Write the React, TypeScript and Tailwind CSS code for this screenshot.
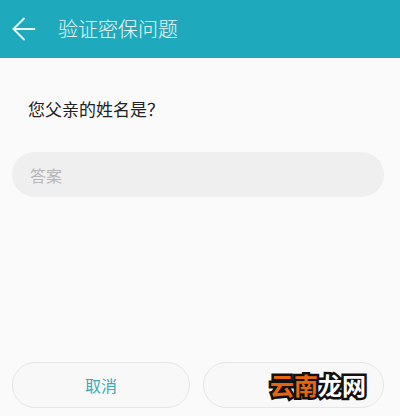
import { ArrowLeft } from "lucide-react";

const font = { fontFamily: '"Noto Sans CJK SC", "Noto Sans", sans-serif' };

export default function App() {
  return (
    <div className="w-[400px] h-[416px] bg-[#fafafa] flex flex-col" style={font}>
      {/* header */}
      <div className="h-[58px] bg-[#1ea9bc] flex items-center pl-[6px]">
        <ArrowLeft className="w-[36px] h-[36px] text-white/90" strokeWidth={1.2} />
        <span className="ml-[16px] text-[20px] leading-none text-white/90 font-light">验证密保问题</span>
      </div>

      <div className="px-[28px] pt-[42px] text-[17px] leading-none text-[#222]">您父亲的姓名是？</div>

      <div className="ml-[12px] mr-[16px] mt-[35px] h-[45px] rounded-full bg-[#efefef] flex items-center px-[18px] text-[16px] text-[#b5b5b5]">
        答案
      </div>

      <div className="flex-1" />

      <div className="flex gap-[13px] pl-[12px] pb-[8px]">
        <div className="w-[178px] h-[46px] rounded-full border border-[#e6e6e6] bg-[#f8f8f8] flex items-center justify-center text-[16px] text-[#3aa9b8]">
          取消
        </div>
        <div className="w-[181px] h-[46px] rounded-full border border-[#e6e6e6] bg-[#f8f8f8] flex items-center justify-end pr-[17px]">
          <span
            className="text-[24px] font-bold leading-none"
            style={{ WebkitTextStroke: "5px #111", paintOrder: "stroke fill" }}
          >
            <span className="text-[#e8650f]">云南</span>
            <span className="text-white">龙网</span>
          </span>
        </div>
      </div>
    </div>
  );
}
